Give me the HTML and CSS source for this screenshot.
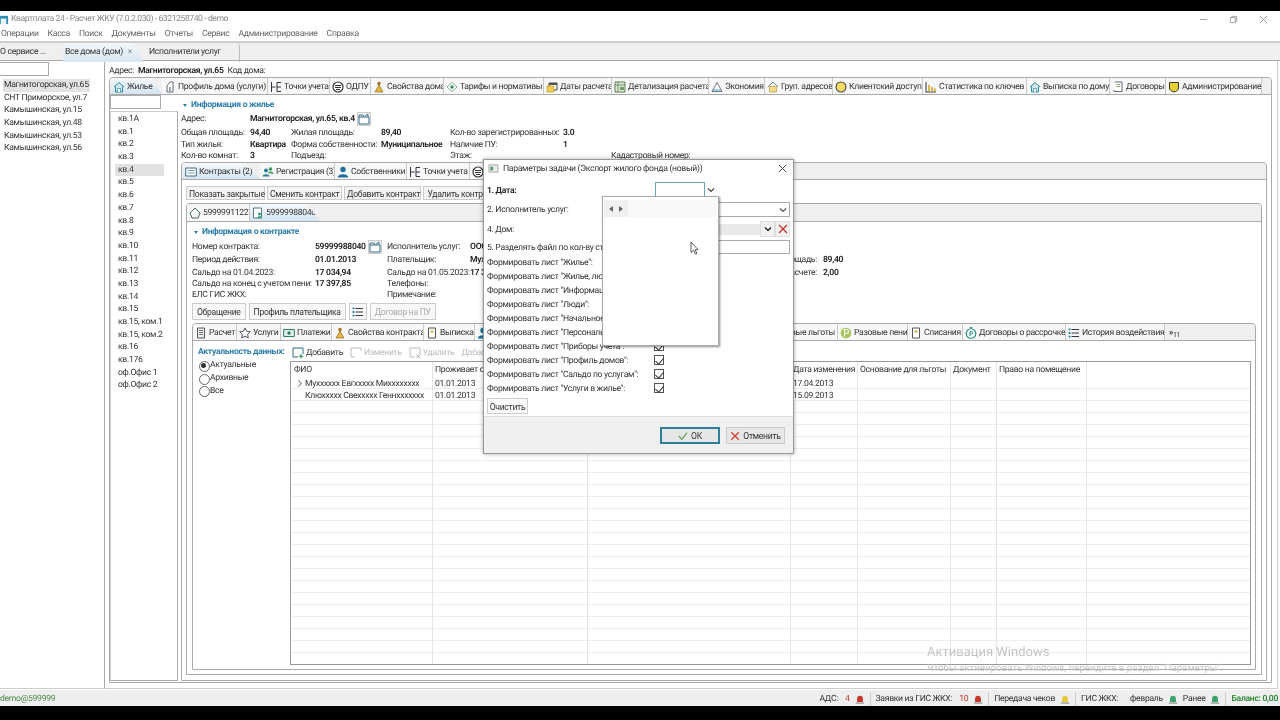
FILE: index.html
```html
<!DOCTYPE html>
<html lang="ru">
<head>
<meta charset="UTF-8">
<title>Квартплата 24</title>
<link rel="stylesheet" href="styles.css">
</head>
<body>
<svg class="sprite" width="0" height="0">
  <symbol id="i-home" viewBox="0 0 12 12"><path d="M1 6 6 1.5 11 6M2.5 5.5V11h7V5.5" fill="#cfe6ee" stroke="#2c8a9c"/><path d="M4.5 11V7.5h3V11" fill="#fff" stroke="#2c8a9c" stroke-width=".7"/></symbol>
  <symbol id="i-profile" viewBox="0 0 12 12"><path d="M6 1 3 5v6h6V1z" fill="#fff" stroke="#667"/><path d="M5 6h2v5H5z" fill="#9ab"/></symbol>
  <symbol id="i-meter" viewBox="0 0 12 12"><path d="M1.5 1v10M1.5 6h4M7 1.5h4M7 6h4M7 10.5h4M7 1.5v9" fill="none" stroke="#334" stroke-width="1"/></symbol>
  <symbol id="i-odpu" viewBox="0 0 12 12"><circle cx="6" cy="6" r="5" fill="#fff" stroke="#333" stroke-width="1.2"/><path d="M3 4.5h6M3 6.5h6M4 8.5h4" stroke="#333" stroke-width="1.1"/></symbol>
  <symbol id="i-props" viewBox="0 0 12 12"><circle cx="6" cy="2.5" r="1.7" fill="#a5701f"/><path d="M6 4 2 11h8z" fill="#e6b93c" stroke="#8a6a20" stroke-width=".7"/></symbol>
  <symbol id="i-tariff" viewBox="0 0 12 12"><path d="M1 6 6 1.5 11 6 6 10.5z" fill="#fff" stroke="#6a8" stroke-width=".9"/><circle cx="6" cy="6" r="1.7" fill="#3a8a55"/></symbol>
  <symbol id="i-cal" viewBox="0 0 12 12"><path d="M3 2h8v7H3z" fill="#fff" stroke="#444"/><path d="M3 2h8v2H3z" fill="#555"/><path d="M1 5h7v6H1z" fill="#f1cf55" stroke="#c09a28" stroke-width=".7"/></symbol>
  <symbol id="i-detail" viewBox="0 0 12 12"><path d="M1 1h10v10H1z" fill="#dcebd7" stroke="#5a7f52"/><path d="M1 4h10M4 1v10" stroke="#5a7f52" stroke-width=".8"/><path d="M6 6h4v3H6z" fill="#6d9c5e"/></symbol>
  <symbol id="i-tri" viewBox="0 0 12 12"><path d="M6 1.5 11 10.5H1z" fill="#fff" stroke="#667" stroke-width=".9"/><path d="M2 9h8" stroke="#3aa5b5"/></symbol>
  <symbol id="i-ghouse" viewBox="0 0 12 12"><path d="M.8 6 6 1.2 11.2 6" fill="none" stroke="#6a8c9a"/><path d="M2.5 5.5h7V11h-7z" fill="#f5dc8a" stroke="#b8983c" stroke-width=".7"/></symbol>
  <symbol id="i-coin" viewBox="0 0 12 12"><circle cx="6" cy="6" r="5" fill="#f6dc66" stroke="#444" stroke-width="1.1"/></symbol>
  <symbol id="i-bars" viewBox="0 0 12 12"><path d="M1 1v10h10" fill="none" stroke="#444" stroke-width="1.1"/><path d="M3.2 4h1.6v6H3.2zM6.2 6h1.6v4H6.2zM9 7.5h1.6V10H9z" fill="#d9a520"/></symbol>
  <symbol id="i-contract" viewBox="0 0 12 12"><path d="M3 1h7v9.5H2V9" fill="#fff" stroke="#667"/><path d="M4.5 3.5h3.5M4.5 5.5h3.5" stroke="#7a9a70"/></symbol>
  <symbol id="i-shield" viewBox="0 0 12 12"><path d="M1.5 1.5h9V7c0 2-2.5 3.5-4.500 4C4 10.500 1.500 9 1.500 7z" fill="#e6cf2e" stroke="#333" stroke-width="1"/></symbol>
  <symbol id="i-card" viewBox="0 0 12 12"><path d="M.7 2h10.600v8H.7z" fill="#fff" stroke="#3d6d86"/><path d="M2.500 4.500h7M2.500 7h7" stroke="#78a0b0"/></symbol>
  <symbol id="i-people" viewBox="0 0 12 12"><circle cx="4" cy="4.500" r="2" fill="#2b7c95"/><path d="M.5 10.500c0-3 7-3 7 0z" fill="#2b7c95"/><circle cx="8.500" cy="3" r="1.800" fill="#3a9a60"/><path d="M6 7c1-2 5-2 5.500 1z" fill="#3a9a60"/></symbol>
  <symbol id="i-person" viewBox="0 0 12 12"><circle cx="6" cy="3.500" r="2.700" fill="#1a6fa0"/><path d="M.8 11.500c0-4.500 10.400-4.500 10.400 0z" fill="#1a6fa0"/></symbol>
  <symbol id="i-folder" viewBox="0 0 12 12"><path d="M1 4h10v7H1z" fill="#fff" stroke="#356a88"/><path d="M1 4V2h4l1 2M7 3l3-2v3" fill="none" stroke="#356a88" stroke-width=".9"/></symbol>
  <symbol id="i-house2" viewBox="0 0 12 12"><path d="M1 6 6 1l5 5-2 5H3z" fill="#fff" stroke="#3d6a5a"/></symbol>
  <symbol id="i-cardp" viewBox="0 0 12 12"><path d="M1.500 1h8v10h-8z" fill="#fff" stroke="#5a7a90"/><circle cx="7.500" cy="7" r="1.500" fill="#2e9a70"/><path d="M5 11c0-2.500 5-2.500 5 0z" fill="#2e9a70"/></symbol>
  <symbol id="i-report" viewBox="0 0 12 12"><path d="M2.500 1h7v10h-7z" fill="#eee" stroke="#555"/><path d="M4 3.500h4M4 5.500h4M4 7.500h4" stroke="#555" stroke-width=".8"/></symbol>
  <symbol id="i-star" viewBox="0 0 12 12"><path d="m6 .9 1.600 3.400 3.700.5-2.700 2.500.7 3.700L6 9.200l-3.300 1.800.7-3.700L.7 4.800l3.700-.5z" fill="#fff" stroke="#445" stroke-width=".9"/></symbol>
  <symbol id="i-pay" viewBox="0 0 12 12"><path d="M.7 2.500h10.600v7H.7z" fill="#dff0e4" stroke="#2c7d66"/><circle cx="6" cy="6" r="1.700" fill="#2c7d66"/></symbol>
  <symbol id="i-list" viewBox="0 0 12 12"><path d="M3.500 2.500H11M3.500 6H11M3.500 9.500H11" stroke="#334" stroke-width="1.100"/><path d="M.6 1.500h1.800v1.800H.6zM.6 5.100h1.800v1.800H.6zM.6 8.700h1.800v1.800H.6z" fill="#1a7fa8"/></symbol>
  <symbol id="i-pgreen" viewBox="0 0 12 12"><circle cx="6" cy="6" r="5.300" fill="#a4c65a"/><path d="M4.500 9.500v-7h2a2 2 0 0 1 0 4h-2" fill="none" stroke="#fff" stroke-width="1.100"/></symbol>
  <symbol id="i-doc2" viewBox="0 0 12 12"><path d="M2.500 1h7v10h-7z" fill="#fff" stroke="#555"/><path d="M4.500 3h3v3h-3z" fill="#d8c77a"/></symbol>
  <symbol id="i-pclock" viewBox="0 0 12 12"><circle cx="6" cy="6.500" r="4.800" fill="#fff" stroke="#1f8a78" stroke-width="1.100"/><path d="M5 9V4.500h1.500a1.200 1.200 0 0 1 0 2.500H5M4.500.7h3" fill="none" stroke="#1f8a78"/></symbol>
  <symbol id="i-add" viewBox="0 0 12 12"><path d="M1 1h10v6M1 1v9h5" fill="none" stroke="#2f6a88"/><path d="M9 7v4.500M6.800 9.300h4.400" stroke="#3a9a60" stroke-width="1.200"/></symbol>
  <symbol id="i-edit" viewBox="0 0 12 12"><path d="M1 1h10v3M1 1v9h4" fill="none" stroke="#bbb"/></symbol>
  <symbol id="i-del" viewBox="0 0 12 12"><path d="M1 1h10v6M1 1v9h5" fill="none" stroke="#bbb"/><path d="m7.500 7.500 3.500 3.500m0-3.500L7.500 11" stroke="#aaa"/></symbol>
  <symbol id="i-bell" viewBox="0 0 12 12"><path d="M2.500 9V5a3.500 3.500 0 0 1 7 0v4z" fill="currentColor"/><path d="M1 9.300h10v2H1z" fill="#aaa"/></symbol>
  <symbol id="i-chev" viewBox="0 0 8 8"><path d="m1 2.500 3 3 3-3" fill="none" stroke="currentColor" stroke-width="1.200"/></symbol>
</svg>

<div class="window">
  <header class="titlebar">
    <svg class="app-icon" viewBox="0 0 12 12"><path d="M1 2h10v9H1z" fill="#2f8fb5"/><path d="M3 5h6v6H3z" fill="#e8f4f8"/></svg>
    <span class="app-title">Квартплата 24 - Расчет ЖКУ (7.0.2.030) - 6321258740 - demo</span>
    <div class="win-btns">
      <svg viewBox="0 0 10 10"><path d="M1 5h8" stroke="#999"/></svg>
      <svg viewBox="0 0 10 10"><path d="M1.500 3h5.500v5.500H1.500zM3 3V1.500h5.500V7H7" fill="none" stroke="#999"/></svg>
      <svg viewBox="0 0 10 10"><path d="m1 1 8 8m0-8-8 8" stroke="#999"/></svg>
    </div>
  </header>
  <nav class="menu">
    <span>Операции</span><span>Касса</span><span>Поиск</span><span>Документы</span><span>Отчеты</span><span>Сервис</span><span>Администрирование</span><span>Справка</span>
  </nav>
  <div class="doc-tabs">
    <div class="doc-tab">О сервисе ...</div>
    <div class="doc-tab doc-tab-active">Все дома (дом) <span class="tab-close">×</span></div>
    <div class="doc-tab doc-tab-last">Исполнители услуг</div>
  </div>

  <div class="workspace">
    <aside class="houses">
      <div class="filter filter-houses"></div>
      <ul class="house-list">
        <li class="selected">Магнитогорская, ул.65</li>
        <li>СНТ Приморское, ул.7</li>
        <li>Камышинская, ул.15</li>
        <li>Камышинская, ул.48</li>
        <li>Камышинская, ул.53</li>
        <li>Камышинская, ул.56</li>
      </ul>
    </aside>

    <main class="house">
      <div class="address-line"><span>Адрес:</span><b>Магнитогорская, ул.65</b><span>Код дома:</span></div>
      <section class="tabbox main-box">
        <div class="tabstrip strip-main">
          <div class="tab tab-active"><svg class="ico"><use href="#i-home"/></svg>Жилье</div>
          <div class="tab"><svg class="ico"><use href="#i-profile"/></svg>Профиль дома (услуги)</div>
          <div class="tab"><svg class="ico"><use href="#i-meter"/></svg>Точки учета</div>
          <div class="tab"><svg class="ico"><use href="#i-odpu"/></svg>ОДПУ</div>
          <div class="tab"><svg class="ico"><use href="#i-props"/></svg>Свойства дома</div>
          <div class="tab"><svg class="ico"><use href="#i-tariff"/></svg>Тарифы и нормативы</div>
          <div class="tab"><svg class="ico"><use href="#i-cal"/></svg>Даты расчета</div>
          <div class="tab"><svg class="ico"><use href="#i-detail"/></svg>Детализация расчета</div>
          <div class="tab"><svg class="ico"><use href="#i-tri"/></svg>Экономия</div>
          <div class="tab"><svg class="ico"><use href="#i-ghouse"/></svg>Груп. адресов</div>
          <div class="tab"><svg class="ico"><use href="#i-coin"/></svg>Клиентский доступ</div>
          <div class="tab"><svg class="ico"><use href="#i-bars"/></svg>Статистика по ключев</div>
          <div class="tab"><svg class="ico"><use href="#i-home"/></svg>Выписка по дому</div>
          <div class="tab"><svg class="ico"><use href="#i-contract"/></svg>Договоры</div>
          <div class="tab"><svg class="ico"><use href="#i-shield"/></svg>Администрирование</div>
        </div>
        <div class="main-pane">
          <div class="apts">
            <div class="filter filter-apts"></div>
            <ul class="apt-list">
              <li>кв.1А</li><li>кв.1</li><li>кв.2</li><li>кв.3</li><li class="selected">кв.4</li><li>кв.5</li><li>кв.6</li><li>кв.7</li><li>кв.8</li><li>кв.9</li><li>кв.10</li><li>кв.11</li><li>кв.12</li><li>кв.13</li><li>кв.14</li><li>кв.15</li><li>кв.15, ком.1</li><li>кв.15, ком.2</li><li>кв.16</li><li>кв.176</li><li>оф.Офис 1</li><li>оф.Офис 2</li>
            </ul>
          </div>

          <div class="apt-detail">
            <h3 class="section-title"><i class="caret"></i>Информация о жилье</h3>
            <div class="info info-apt">
              <span>Адрес:</span><b class="wide">Магнитогорская, ул.65, кв.4<button class="icon-btn"><svg class="ico"><use href="#i-folder"/></svg></button></b>
              <span>Общая площадь:</span><b>94,40</b><span>Жилая площадь:</span><b>89,40</b><span>Кол-во зарегистрированных:</span><b>3.0</b><span></span>
              <span>Тип жилья:</span><b>Квартира</b><span>Форма собственности:</span><b>Муниципальное</b><span>Наличие ПУ:</span><b>1</b><span></span>
              <span>Кол-во комнат:</span><b>3</b><span>Подъезд:</span><b></b><span>Этаж:</span><b></b><span>Кадастровый номер:</span>
            </div>

            <section class="tabbox apt-box">
              <div class="tabstrip strip-apt">
                <div class="tab tab-active"><svg class="ico"><use href="#i-card"/></svg>Контракты (2)</div>
                <div class="tab"><svg class="ico"><use href="#i-people"/></svg>Регистрация (3)</div>
                <div class="tab"><svg class="ico"><use href="#i-person"/></svg>Собственники</div>
                <div class="tab"><svg class="ico"><use href="#i-meter"/></svg>Точки учета</div>
                <div class="tab"><svg class="ico"><use href="#i-odpu"/></svg>ОДПУ</div>
              </div>
              <div class="apt-pane">
                <div class="buttons buttons-contract">
                  <button class="btn">Показать закрытые</button>
                  <button class="btn">Сменить контракт</button>
                  <button class="btn">Добавить контракт</button>
                  <button class="btn">Удалить контракт</button>
                </div>
                <section class="tabbox contract-box">
                  <div class="tabstrip strip-contract">
                    <div class="tab"><svg class="ico"><use href="#i-house2"/></svg>59999911227</div>
                    <div class="tab tab-active"><svg class="ico"><use href="#i-cardp"/></svg>59999988040</div>
                  </div>
                  <div class="contract-pane">
                    <h3 class="section-title"><i class="caret"></i>Информация о контракте</h3>
                    <div class="info info-contract">
                      <span>Номер контракта:</span><b class="with-btn">59999988040<button class="icon-btn"><svg class="ico"><use href="#i-folder"/></svg></button></b><span>Исполнитель услуг:</span><b class="wide-end">ООО "Управляющая компания Жилищно-коммунальное хозяйство"</b>
                      <span>Период действия:</span><b>01.01.2013</b><span>Плательщик:</span><b>Мухххххх</b><span class="r">Общая площадь:</span><b>89,40</b>
                      <span>Сальдо на 01.04.2023:</span><b>17 034,94</b><span>Сальдо на 01.05.2023:</span><b>17 397,85</b><span class="r">Кол-во в расчете:</span><b>2,00</b>
                      <span>Сальдо на конец с учетом пени:</span><b>17 397,85</b><span>Телефоны:</span><b></b><span></span><b></b>
                      <span>ЕЛС ГИС ЖКХ:</span><b></b><span>Примечание:</span><b></b><span></span><b></b>
                    </div>
                    <div class="buttons buttons-payer">
                      <button class="btn">Обращение</button>
                      <button class="btn">Профиль плательщика</button>
                      <button class="btn btn-icon"><svg class="ico"><use href="#i-list"/></svg></button>
                      <button class="btn btn-off">Договор на ПУ</button>
                    </div>
                    <section class="tabbox sub-box">
                      <div class="tabstrip strip-sub">
                        <div class="tab"><svg class="ico"><use href="#i-report"/></svg>Расчет</div>
                        <div class="tab"><svg class="ico"><use href="#i-star"/></svg>Услуги</div>
                        <div class="tab"><svg class="ico"><use href="#i-pay"/></svg>Платежи</div>
                        <div class="tab"><svg class="ico"><use href="#i-props"/></svg>Свойства контракта</div>
                        <div class="tab"><svg class="ico"><use href="#i-doc2"/></svg>Выписка</div>
                        <div class="tab"><svg class="ico"><use href="#i-person"/></svg>Проживающие</div>
                        <div class="tab">Льготы</div>
                        <div class="tab tab-end">Разовые льготы</div>
                        <div class="tab"><svg class="ico"><use href="#i-pgreen"/></svg>Разовые пени</div>
                        <div class="tab"><svg class="ico"><use href="#i-doc2"/></svg>Списания</div>
                        <div class="tab"><svg class="ico"><use href="#i-pclock"/></svg>Договоры о рассрочке</div>
                        <div class="tab"><svg class="ico"><use href="#i-list"/></svg>История воздействия</div>
                        <div class="tab tab-more"><b>»</b><small>11</small></div>
                      </div>
                      <div class="sub-pane">
                        <div class="relevance">
                          <div class="relevance-title">Актуальность данных:</div>
                          <label class="radio radio-on">Актуальные</label>
                          <label class="radio">Архивные</label>
                          <label class="radio">Все</label>
                        </div>
                        <div class="people">
                          <div class="toolbar">
                            <span class="tool"><svg class="ico"><use href="#i-add"/></svg>Добавить</span>
                            <span class="tool tool-off"><svg class="ico"><use href="#i-edit"/></svg>Изменить</span>
                            <span class="tool tool-off"><svg class="ico"><use href="#i-del"/></svg>Удалить</span>
                            <span class="tool tool-off">Добавить</span>
                          </div>
                          <div class="grid">
                            <div class="grid-row grid-head"><span>ФИО</span><span>Проживает с</span><span>Проживает по</span><span></span><span></span><span>Дата изменения</span><span>Основание для льготы</span><span>Документ</span><span>Право на помещение</span></div>
                            <div class="grid-row"><span class="expander">Мухххххх Евгххххх Михххххххх</span><span>01.01.2013</span><span></span><span></span><span></span><span>17.04.2013</span></div>
                            <div class="grid-row"><span class="expander-none">Клюххххх Свеххххх Геннххххххх</span><span>01.01.2013</span><span></span><span></span><span></span><span>15.09.2013</span></div>
                          </div>
                        </div>
                      </div>
                    </section>
                  </div>
                </section>
              </div>
            </section>
          </div>
        </div>
      </section>
    </main>
  </div>

  <footer class="status">
    <span class="status-user">demo@599999</span>
    <div class="status-right">
      <span>АДС:</span><span class="num">4</span><svg class="bell bell-red"><use href="#i-bell"/></svg><i class="sep"></i>
      <span>Заявки из ГИС ЖКХ:</span><span class="num">10</span><svg class="bell bell-red"><use href="#i-bell"/></svg><i class="sep"></i>
      <span>Передача чеков</span><svg class="bell bell-yellow"><use href="#i-bell"/></svg><i class="sep"></i>
      <span class="gis">ГИС ЖКХ:</span><span>февраль</span><svg class="bell bell-green"><use href="#i-bell"/></svg><span>Ранее</span><svg class="bell bell-green"><use href="#i-bell"/></svg><i class="sep"></i>
      <b class="balance">Баланс: 0,00</b>
    </div>
  </footer>
</div>

<div class="watermark">
  <div class="wm-big">Активация Windows</div>
  <div class="wm-small">Чтобы активировать Windows, перейдите в раздел "Параметры".</div>
</div>

<div class="dialog">
  <div class="dlg-title">
    <svg class="dlg-icon" viewBox="0 0 12 12"><path d="M1 2h10v8H1z" fill="#e6e6e6" stroke="#aaa"/><path d="M2.500 4h3v4h-3z" fill="#5a9a70"/></svg>
    <span>Параметры задачи (Экспорт жилого фонда (новый))</span>
    <svg class="dlg-close" viewBox="0 0 10 10"><path d="m1 1 8 8m0-8-8 8" stroke="#333"/></svg>
  </div>
  <div class="dlg-body">
    <div class="dlg-row row-date"><b>1. Дата:</b><div class="date-input"></div><svg class="chev"><use href="#i-chev"/></svg></div>
    <div class="dlg-row row-combo"><span>2. Исполнитель услуг:</span><div class="combo"><svg class="chev"><use href="#i-chev"/></svg></div></div>
    <div class="dlg-row row-house"><span>4. Дом:</span><div class="house-field"></div><button class="mini-btn"><svg class="chev chev-bold"><use href="#i-chev"/></svg></button><button class="mini-btn"><svg class="x-red" viewBox="0 0 10 10"><path d="m1 1 8 8m0-8-8 8" stroke="#c8352b" stroke-width="1.300"/></svg></button></div>
    <div class="dlg-row row-split"><span>5. Разделять файл по кол-ву строк:</span><div class="split-input"></div></div>
    <div class="checks">
      <label>Формировать лист "Жилье":<i class="check"></i></label>
      <label>Формировать лист "Жилье, люди":<i class="check"></i></label>
      <label>Формировать лист "Информация":<i class="check"></i></label>
      <label>Формировать лист "Люди":<i class="check"></i></label>
      <label>Формировать лист "Начальное сальдо":<i class="check"></i></label>
      <label>Формировать лист "Персональные":<i class="check"></i></label>
      <label>Формировать лист "Приборы учета":<i class="check on"></i></label>
      <label>Формировать лист "Профиль домов":<i class="check on"></i></label>
      <label>Формировать лист "Сальдо по услугам":<i class="check on"></i></label>
      <label>Формировать лист "Услуги в жилье":<i class="check on"></i></label>
    </div>
    <button class="btn btn-clear">Очистить</button>
  </div>
  <div class="dlg-foot">
    <button class="dlg-btn dlg-ok"><svg viewBox="0 0 12 12"><path d="m1 6 3.500 4L11 2" fill="none" stroke="#57a34a" stroke-width="1.400"/></svg>ОК</button>
    <button class="dlg-btn"><svg viewBox="0 0 12 12"><path d="m1.500 1.500 9 9m0-9-9 9" stroke="#d2402f" stroke-width="1.500"/></svg>Отменить</button>
  </div>
  <div class="calendar">
    <div class="cal-head">
      <div class="cal-nav"><i class="arrow arrow-l"></i><i class="arrow arrow-r"></i></div>
    </div>
  </div>
  <svg class="cursor" viewBox="0 0 9 14"><path d="M1 1v10.500l2.500-2.300 2 4 1.500-.7-2-3.800H8z" fill="#fff" stroke="#333" stroke-width=".8"/></svg>
</div>
</body>
</html>
```
FILE: styles.css
```css
* { box-sizing: border-box; }

html, body {
    margin: 0;
    height: 720px;
    overflow: hidden;
}

body {
    background-color: #000;
    color: #333;
    font-family: Roboto, sans-serif;
    font-size: 8.6px;
    line-height: 12px;
    letter-spacing: -.3px;
    text-rendering: geometricPrecision;
    position: relative;
    filter: blur(.3px);
}

.sprite { position: absolute; }

ul { list-style: none; margin: 0; padding: 0; }
button { font: inherit; color: inherit; padding: 0; letter-spacing: inherit; }
b { color: #222; font-weight: 600; }

.ico { width: 12px; height: 12px; flex: none; }

.window {
    margin-top: 11px;
    height: 695px;
    background-color: #fff;
    display: flex;
    flex-direction: column;
}

/* title + menu */
.titlebar {
    height: 16px;
    display: flex;
    align-items: center;
    color: #888;
}
.app-icon { width: 11px; height: 11px; margin: 0 0 0 -2px; }
.app-title { margin-left: 2px; letter-spacing: -.42px; }
.win-btns {
    margin-left: auto;
    display: flex;
    gap: 21px;
    padding-right: 12px;
}
.win-btns svg { width: 9px; height: 9px; }

.menu {
    height: 13px;
    display: flex;
    gap: 9px;
    padding: 1px 0 0 1px;
    color: #666;
}

/* document tabs */
.doc-tabs {
    margin-top: 1px;
    height: 20px;
    border-top: 2px solid #ccc;
    border-bottom: 1px solid #aaa;
    background-color: #efefef;
    display: grid;
    grid-template-columns: 63px 80px 97px;
    line-height: 19px;
}
.doc-tab { white-space: nowrap; }
.doc-tab-active {
    padding-left: 2px;
    background: linear-gradient(#f4f7fa, #d6e6f4);
    clip-path: polygon(0 0, 88% 0, 100% 100%, 0 100%);
    border-radius: 3px 0 0 0;
}
.doc-tab-last {
    padding-left: 6px;
    border-right: 1px solid #bbb;
    border-radius: 0 4px 0 0;
}
.tab-close { color: #888; margin-left: 3px; }

.workspace {
    flex: 1;
    display: flex;
    min-height: 0;
}

/* houses */
.houses {
    width: 105px;
    border-right: 1px solid #aaa;
    border-bottom: 1px solid #ccc;
    margin-bottom: 1px;
    flex: none;
}
.filter {
    background-color: #fff;
    border: 1px solid #aaa;
}
.filter-houses {
    width: 50px;
    height: 14px;
    margin: 1px 0 3px -1px;
    border-left: none;
}
.house-list li {
    height: 12.7px;
    line-height: 12.7px;
    width: 87px;
    margin-left: 3px;
    padding-left: 1px;
    white-space: nowrap;
}
.house-list .selected,
.apt-list .selected { background-color: #e2e2e2; }

/* right side */
.house {
    flex: 1;
    min-width: 0;
    padding: 0 5px 5px 4px;
    display: flex;
    flex-direction: column;
    border-right: 1px solid #ccc;
    margin-right: 2px;
    border-bottom: 1px solid #ccc;
    margin-bottom: 1px;
}
.address-line {
    height: 16px;
    padding-top: 4px;
    display: flex;
    gap: 4px;
}

.tabbox {
    border: 1px solid #aaa;
    border-radius: 4px 4px 0 0;
    display: flex;
    flex-direction: column;
    background-color: #fff;
}
.tabstrip {
    height: 17px;
    flex: none;
    background-color: #efefef;
    border-bottom: 1px solid #aaa;
    border-radius: 4px 4px 0 0;
    display: grid;
    overflow: hidden;
    white-space: nowrap;
}
.tab {
    display: flex;
    align-items: center;
    gap: 2px;
    padding: 1px 0 0 2px;
    border-right: 1px solid #c8c8c8;
    background-color: #f7f7f7;
    overflow: hidden;
}
.tab-active {
    background: linear-gradient(#f6f8fb, #d3e4f3);
    clip-path: polygon(0 0, 82% 0, 100% 100%, 0 100%);
    border-right: none;
}
.tab-end { justify-content: flex-end; padding-right: 2px; }
.tab-more { border-right: none; background: none; padding-left: 4px; gap: 0; }
.tab-more small { font-size: 7px; margin-top: 4px; }

.main-box { flex: 1; min-height: 0; }
.strip-main {
    grid-template-columns: 51px 106px 62px 41px 73px 100px 68px 97px 56px 68px 90px 104px 83px 56px 96px;
    padding-left: 1px;
}
.main-pane {
    flex: 1;
    min-height: 0;
    display: flex;
    padding-bottom: 1px;
}

.apts {
    width: 71px;
    flex: none;
    display: flex;
    flex-direction: column;
}
.filter-apts { width: 51px; height: 14px; margin: 0 0 2px 0; }
.apt-list {
    flex: 1;
    width: 68px;
    border: 1px solid #aaa;
    border-left-color: #ccc;
    border-top-color: #ccc;
    padding: 1px 0 0 4px;
}
.apt-list li {
    height: 12.7px;
    line-height: 12.7px;
    padding-left: 3px;
    width: 49px;
    white-space: nowrap;
}

.apt-detail {
    flex: 1;
    min-width: 0;
    padding-right: 4px;
    display: flex;
    flex-direction: column;
}
.section-title {
    margin: 0;
    font-size: inherit;
    font-weight: bold;
    color: #2f7fae;
    height: 12px;
    display: flex;
    align-items: center;
}
.apt-detail > .section-title { margin-top: 4px; }
.caret {
    width: 0;
    height: 0;
    border-left: 2.500px solid transparent;
    border-right: 2.500px solid transparent;
    border-top: 3.500px solid #2f7fae;
    margin: 0 4px 0 2px;
}

.info { display: grid; }
.info-apt {
    grid-template-columns: 69px 41px 90px 69px 113px 48px 1fr;
    grid-template-rows: 15px 13px 11px 12px;
    align-items: center;
    white-space: nowrap;
}
.info-apt .wide { grid-column: 2 / -1; display: flex; align-items: center; gap: 2px; }
.icon-btn {
    width: 14px;
    height: 14px;
    background-color: #f2f2f2;
    border: 1px solid #ccc;
    display: inline-flex;
    align-items: center;
    justify-content: center;
}

.apt-box { flex: 1; min-height: 0; }
.strip-apt {
    grid-template-columns: 77px 75px 72px 63px 60px;
    padding-left: 1px;
}
.apt-pane {
    flex: 1;
    min-height: 0;
    padding: 0 4px 5px 4px;
    display: flex;
    flex-direction: column;
}
.buttons { display: flex; gap: 3px; }
.btn {
    background-color: #f3f3f3;
    border: 1px solid #ccc;
    padding: 1px 2px 0;
    white-space: nowrap;
}
.buttons-contract { height: 14px; margin: 6px 0 3px; gap: 2px; }
.buttons-contract .btn { flex: none; width: 77px; }
.buttons-contract .btn:first-child { width: 79px; }
.buttons-contract .btn:nth-child(2) { width: 75px; }

.contract-box { flex: 1; min-height: 0; }
.strip-contract {
    grid-template-columns: 63px 70px;
    height: 18px;
}
.contract-pane {
    flex: 1;
    min-height: 0;
    padding: 4px 5px 4px 5px;
    display: flex;
    flex-direction: column;
}
.info-contract {
    margin-top: 3px;
    grid-template-columns: 123px 72px 83px 240px 113px 1fr;
    grid-template-rows: 12px 14px 11px 11px 12px;
    align-items: center;
    white-space: nowrap;
}
.info-contract .with-btn { display: flex; align-items: center; gap: 2px; }
.info-contract .wide-end { grid-column: 4 / -1; }
.info-contract .r { text-align: right; padding-right: 6px; }

.buttons-payer { height: 17px; margin: 2px 0 3px 0; }
.buttons-payer .btn { background-color: #f8f8f8; padding: 1px 4px 0; }
.buttons-payer .btn-icon { width: 18px; padding: 0; display: flex; align-items: center; justify-content: center; }
.btn-off { color: #aaa; }

.sub-box { flex: 1; min-height: 0; }
.strip-sub {
    grid-template-columns: 44px 44px 51px 92px 51px 126px 160px 77px 70px 55px 103px 99px 24px;
}
.sub-pane {
    flex: 1;
    min-height: 0;
    display: flex;
    padding-bottom: 4px;
}
.relevance {
    width: 97px;
    flex: none;
    padding-left: 5px;
}
.relevance-title {
    margin: 5px 0 1px;
    font-weight: bold;
    color: #2f7fae;
    white-space: nowrap;
}
.radio {
    display: flex;
    align-items: center;
    height: 12.700px;
    padding-left: 12px;
    position: relative;
}
.radio::before {
    content: "";
    position: absolute;
    left: 1px;
    top: 2px;
    width: 9px;
    height: 9px;
    border: 1px solid #666;
    border-radius: 50%;
}
.radio-on::after {
    content: "";
    position: absolute;
    left: 3px;
    top: 4px;
    width: 5px;
    height: 5px;
    border-radius: 50%;
    background-color: #333;
}

.people {
    flex: 1;
    min-width: 0;
    display: flex;
    flex-direction: column;
    padding-right: 4px;
}
.toolbar {
    height: 20px;
    display: flex;
    align-items: center;
    gap: 7px;
    padding: 3px 0 0 2px;
    white-space: nowrap;
}
.tool { display: flex; align-items: center; gap: 2px; }
.tool-off { color: #bbb; }

.grid {
    flex: 1;
    min-height: 0;
    border: 1px solid #999;
    overflow: hidden;
    background:
        linear-gradient(#e4e4e4, #e4e4e4) 141px 0 / 1px 100% no-repeat,
        linear-gradient(#e4e4e4, #e4e4e4) 296px 0 / 1px 100% no-repeat,
        linear-gradient(#e4e4e4, #e4e4e4) 499px 0 / 1px 100% no-repeat,
        linear-gradient(#e4e4e4, #e4e4e4) 566px 0 / 1px 100% no-repeat,
        linear-gradient(#e4e4e4, #e4e4e4) 659px 0 / 1px 100% no-repeat,
        linear-gradient(#e4e4e4, #e4e4e4) 705px 0 / 1px 100% no-repeat,
        linear-gradient(#e4e4e4, #e4e4e4) 795px 0 / 1px 100% no-repeat,
        repeating-linear-gradient(transparent 0, transparent 11px, #eee 11px, #eee 12px) 0 15px / 100% 100% no-repeat;
}
.grid-row {
    display: grid;
    grid-template-columns: 141px 155px 203px 0 0 67px 93px 46px 90px;
    height: 12px;
    line-height: 14px;
    white-space: nowrap;
}
.grid-row span { padding-left: 3px; overflow: hidden; }
.grid-head { height: 15px; line-height: 17px; }
.grid-row span:nth-child(4), .grid-row span:nth-child(5) { padding: 0; }
.expander { position: relative; padding-left: 14px !important; }
.expander::before {
    content: "";
    position: absolute;
    left: 5px;
    top: 4px;
    width: 4px;
    height: 4px;
    border-top: 1px solid #888;
    border-right: 1px solid #888;
    transform: rotate(45deg);
}
.expander-none { padding-left: 14px !important; }

/* status bar */
.status {
    height: 16px;
    flex: none;
    background-color: #eee;
    display: flex;
    align-items: center;
    justify-content: space-between;
    white-space: nowrap;
    padding-top: 2px;
}
.status-user { color: #4a8a4a; }
.status-right { display: flex; align-items: center; gap: 5px; padding-right: 2px; }
.status-right .num { color: #b5392e; margin-left: 2px; }
.sep { width: 1px; height: 14px; background-color: #ccc; }
.bell { width: 10px; height: 11px; }
.bell-red { color: #c8352b; }
.bell-yellow { color: #e6cc3c; }
.bell-green { color: #3aa36a; }
.gis { margin-right: 7px; }
.balance { color: #2f8a3a; }

.watermark {
    position: absolute;
    left: 927px;
    top: 645px;
    color: #c4c4c4;
    white-space: nowrap;
    letter-spacing: 0;
}
.wm-big { font-size: 13px; line-height: 16px; }
.wm-small { font-size: 9.700px; line-height: 15px; }

/* dialog */
.dialog {
    position: absolute;
    left: 483px;
    top: 159px;
    width: 311px;
    height: 295px;
    background-color: #fff;
    border: 1px solid #999;
    box-shadow: 0 0 4px rgba(0, 0, 0, .35);
    display: flex;
    flex-direction: column;
}
.dlg-title {
    height: 17px;
    flex: none;
    display: flex;
    align-items: center;
    padding: 0 6px 0 4px;
}
.dlg-icon { width: 11px; height: 11px; margin-right: 4px; }
.dlg-close { width: 9px; height: 9px; margin-left: auto; }
.dlg-body {
    flex: 1;
    padding: 5px 3px 0 3px;
}
.dlg-row { display: flex; align-items: center; white-space: nowrap; }
.dlg-row > span, .dlg-row > b { padding-top: 1px; }
.row-date { height: 16px; }
.row-date b { width: 168px; }
.date-input {
    width: 50px;
    height: 16px;
    border: 1px solid #6aa5b8;
}
.chev { width: 8px; height: 8px; flex: none; }
.row-date .chev { margin-left: 2px; color: #444; }
.row-combo { height: 15px; margin-top: 4px; }
.row-combo span { width: 168px; flex: none; }
.combo {
    flex: 1;
    height: 15px;
    border: 1px solid #aaa;
    display: flex;
    align-items: center;
    justify-content: flex-end;
    padding-right: 2px;
    color: #555;
}
.row-house { height: 16px; margin-top: 4px; }
.row-house span { width: 168px; flex: none; }
.house-field { width: 105px; height: 11px; background-color: #e8e8e8; }
.mini-btn {
    width: 15px;
    height: 16px;
    background-color: #f1f1f1;
    border: 1px solid #ddd;
    display: flex;
    align-items: center;
    justify-content: center;
}
.chev-bold { color: #111; }
.x-red { width: 10px; height: 10px; }
.row-split { height: 14px; margin-top: 3px; }
.row-split span { width: 168px; flex: none; overflow: hidden; }
.split-input { flex: 1; height: 14px; border: 1px solid #aaa; }

.checks { margin-top: 1px; }
.checks label {
    height: 14px;
    padding-top: 1px;
    display: flex;
    align-items: center;
    white-space: nowrap;
    position: relative;
}
.check { position: absolute; left: 167px; top: 2px; width: 10px; height: 10px; }
.check.on { border: 1px solid #555; }
.check.on::after {
    content: "";
    position: absolute;
    left: 2px;
    top: 0;
    width: 4px;
    height: 7px;
    border-right: 1px solid #333;
    border-bottom: 1px solid #333;
    transform: rotate(40deg);
}
.btn-clear {
    display: block;
    width: 41px;
    height: 16px;
    margin-top: 3px;
    padding: 1px 0 0;
    background-color: #fafafa;
}

.dlg-foot {
    height: 37px;
    flex: none;
    background-color: #f0f0f0;
    border-top: 1px solid #ddd;
    display: flex;
    justify-content: flex-end;
    gap: 6px;
    padding: 10px 8px 0 0;
}
.dlg-btn {
    width: 59px;
    height: 17px;
    padding-top: 1px;
    background-color: #e6e6e6;
    border: 1px solid #ccc;
    display: flex;
    align-items: center;
    justify-content: center;
    gap: 3px;
}
.dlg-btn svg { width: 10px; height: 10px; }
.dlg-ok { width: 60px; border: 2px solid #2f7f9c; }

.calendar {
    position: absolute;
    left: 118px;
    top: 36px;
    width: 117px;
    height: 150px;
    background-color: #fff;
    border: 1px solid #aaa;
    box-shadow: 1px 1px 2px rgba(0, 0, 0, .45);
    padding: 3px 1px 0;
}
.cal-head { height: 17px; background-color: #f8f8f8; }
.cal-nav {
    width: 24px;
    height: 17px;
    background-color: #f0f0f0;
    display: flex;
    align-items: center;
    gap: 6px;
    padding-left: 5px;
}
.arrow { width: 0; height: 0; border-top: 3.500px solid transparent; border-bottom: 3.500px solid transparent; }
.arrow-l { border-right: 4px solid #666; }
.arrow-r { border-left: 4px solid #666; }

.cursor {
    position: absolute;
    left: 206px;
    top: 81px;
    width: 9px;
    height: 14px;
}
```
